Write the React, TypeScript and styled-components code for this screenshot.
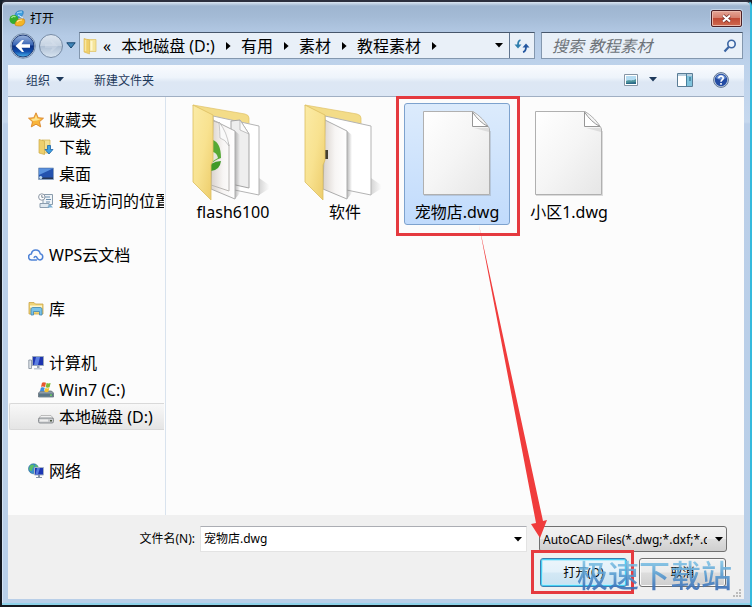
import React from 'react';
import styled, { createGlobalStyle, css } from 'styled-components';

const GlobalStyle = createGlobalStyle`
  *, *::before, *::after { box-sizing: border-box; }
  body {
    margin: 0;
    background: #14202c;
    font-family: "Noto Sans", "Noto Sans CJK SC", sans-serif;
    font-size: 12px;
    color: #000;
  }
  button, input, select { font: inherit; color: inherit; }
  button { cursor: default; }
`;

const Dialog = styled.div`
  position: relative;
  display: flex;
  flex-direction: column;
  min-height: 100vh;
  padding: 1px 6px 6px;
  border: 2px solid #14181f;
  border-top-color: #2c2f3d;
  border-right: 2px solid #35b9dc;
  border-radius: 6px 6px 0 0;
  background: linear-gradient(#dbe6f2 0, #9eb5d0 4px, #a3bad5 14px, #b5cbe6 34px, #bdd2eb 64px, #c6d8ee 120px, #bbcfe9 122px, #b9cfe8 100%);
  box-shadow: inset 0 -2px 0 #8fd3ea, inset 1px 0 0 #d5e3f3;
`;

const TitleBar = styled.header`
  display: flex;
  align-items: center;
  height: 29px;
  gap: 4px;
  padding: 2px 0 0 1px;
`;

const Title = styled.h1`
  flex: 1;
  margin: 0;
  font-size: 12px;
  line-height: 16px;
  font-weight: 400;
`;

const CloseButton = styled.button`
  display: grid;
  place-items: center;
  width: 31px;
  height: 17px;
  margin-right: 2px;
  padding: 0;
  border: 1px solid #4d2026;
  border-radius: 2px;
  background: linear-gradient(#e5a596 0, #d67f6d 45%, #c04a35 50%, #cf6a4f 100%);
  box-shadow: inset 0 0 0 1px #eab8ab, 0 0 0 1px #c3d4e6;
`;

const NavRow = styled.nav`
  display: flex;
  align-items: center;
  height: 27px;
  margin-bottom: 6px;
`;

const History = styled.div`
  display: flex;
  align-items: center;
  gap: 2px;
  width: 71px;
  padding-left: 2px;
`;

const PlainButton = styled.button`
  display: inline-flex;
  align-items: center;
  gap: 6px;
  padding: 0;
  border: 0;
  background: none;
`;

const AddressBar = styled.div`
  display: flex;
  flex: 1;
  align-items: center;
  min-width: 0;
  height: 27px;
  padding-left: 3px;
  border: 1px solid #8397ae;
  border-top-color: #46566b;
  background: #e9f0f8;
`;

const Crumbs = styled.ol`
  display: flex;
  flex: 1;
  align-items: center;
  min-width: 0;
  overflow: hidden;
  margin: 0;
  padding: 0 0 0 6px;
  gap: 10px;
  list-style: none;
`;

const Crumb = styled.li`
  display: flex;
  align-items: center;
  gap: 11px;
  white-space: nowrap;
  font-size: 16px;
  line-height: 22px;
`;

const CrumbLink = styled.a`
  color: inherit;
  text-decoration: none;
`;

const RefreshButton = styled(PlainButton)`
  justify-content: center;
  width: 25px;
  height: 25px;
  border-left: 1px solid #60758f;
`;

const AddressDrop = styled(PlainButton)`
  justify-content: center;
  width: 20px;
  height: 25px;
`;

const SearchBox = styled.form`
  display: flex;
  align-items: center;
  width: 202px;
  height: 27px;
  margin: 0 1px 0 6px;
  padding: 0 5px 0 10px;
  border: 1px solid #8397ae;
  border-top-color: #46566b;
  background: #e9f0f8;
`;

const SearchInput = styled.input`
  flex: 1;
  min-width: 0;
  padding: 0;
  border: 0;
  outline: 0;
  background: none;
  font-size: 16px;
  line-height: 24px;
  font-style: italic;
  &::placeholder { color: #6d7378; opacity: 1; }
`;

const Client = styled.div`
  display: flex;
  flex: 1;
  flex-direction: column;
  background: #fcfcfc;
`;

const Toolbar = styled.div`
  display: flex;
  align-items: center;
  height: 32px;
  padding: 0 15px 2px 18px;
  border-bottom: 1px solid #a0afc3;
  background: linear-gradient(#f9fbfe 0, #eef4fb 40%, #dde7f4 55%, #dce7f5 100%);
  color: #1e395b;
`;

const ToolGroup = styled.div<{ $gap: number }>`
  display: flex;
  align-items: center;
  gap: ${({ $gap }) => $gap}px;
`;

const ToolSpacer = styled.div`
  flex: 1;
`;

const Panes = styled.div`
  display: flex;
  flex: 1;
  min-height: 0;
`;

const Sidebar = styled.aside`
  display: flex;
  flex-direction: column;
  flex: 0 0 158px;
  min-width: 0;
  gap: 27px;
  padding: 9px 1px 30px 1px;
  border-right: 1px solid #d9e3ee;
`;

const TreeGroup = styled.ul`
  margin: 0;
  padding: 0;
  list-style: none;
`;

const TreeLink = styled.a<{ $level: number; $active?: boolean }>`
  display: flex;
  align-items: center;
  gap: 5px;
  height: 27px;
  overflow: hidden;
  border: 1px solid transparent;
  border-right: 0;
  padding-left: ${({ $level }) => ($level === 0 ? 18 : 28)}px;
  color: #000;
  text-decoration: none;
  white-space: nowrap;
  font-size: 16px;
  line-height: 24px;
  svg { flex: none; }
  ${({ $active }) =>
    $active &&
    css`
      border-color: #d9d9d9;
      border-radius: 2px 0 0 2px;
      background: linear-gradient(#f8f8f8, #e5e5e5);
    `}
`;

const FileGrid = styled.ul`
  display: flex;
  flex: 1;
  flex-wrap: wrap;
  align-content: flex-start;
  gap: 6px;
  margin: 0;
  padding: 6px 0 6px 14px;
  list-style: none;
`;

const FileItem = styled.li`
  position: relative;
`;

const FileTile = styled.button<{ $selected?: boolean }>`
  display: flex;
  flex-direction: column;
  align-items: center;
  width: 106px;
  height: 122px;
  padding: 0;
  border: 1px solid transparent;
  border-radius: 3px;
  background: none;
  font-size: 16px;
  line-height: 24px;
  white-space: nowrap;
  svg { flex: none; }
  ${({ $selected }) =>
    $selected &&
    css`
      border-color: #7da2ce;
      background: linear-gradient(#dcebfc, #c1dbfc);
    `}
`;

const Highlight = styled.span<{ $inset: string }>`
  position: absolute;
  z-index: 2;
  inset: ${({ $inset }) => $inset};
  border: 3px solid #e53a3f;
  pointer-events: none;
`;

const Footer = styled.footer`
  position: relative;
  display: grid;
  grid-template-columns: 187px minmax(0, 1fr) 188px;
  row-gap: 6px;
  padding: 11px 17px 12px 0;
  background: #f0f0f0;
`;

const FieldLabel = styled.label`
  align-self: center;
  justify-self: end;
  line-height: 18px;
`;

const ComboBox = styled.div`
  display: flex;
  align-items: center;
  height: 26px;
  margin: 0 12px 0 5px;
  padding: 0 4px 0 3px;
  border: 1px solid #e3e3e3;
  border-top-color: #abadb3;
  background: #fff;
`;

const ComboInput = styled.input`
  flex: 1;
  min-width: 0;
  padding: 0;
  border: 0;
  outline: 0;
  background: none;
  line-height: 20px;
`;

const FilterField = styled.div`
  position: relative;
  display: flex;
  svg {
    position: absolute;
    right: 4px;
    top: 11px;
    pointer-events: none;
  }
`;

const FilterSelect = styled.select`
  appearance: none;
  width: 100%;
  height: 26px;
  padding: 0 19px 0 3px;
  border: 1px solid #707070;
  border-radius: 3px;
  outline: 0;
  background: linear-gradient(#f2f2f2 0, #ebebeb 48%, #dddddd 52%, #cfcfcf 100%);
  overflow: hidden;
`;

const Actions = styled.div`
  grid-column: 3;
  display: flex;
  justify-content: space-between;
  padding: 0 1px;
`;

const ActionSlot = styled.div`
  position: relative;
`;

const ActionButton = styled.button<{ $primary?: boolean }>`
  width: 87px;
  height: 29px;
  padding: 0 0 2px;
  border: 1px solid #707070;
  border-radius: 3px;
  background: linear-gradient(#f2f2f2 0, #ebebeb 48%, #dddddd 52%, #cfcfcf 100%);
  box-shadow: inset 0 0 0 1px #fafafa;
  ${({ $primary }) =>
    $primary &&
    css`
      border-color: #3c7fb1;
      background: linear-gradient(#ecf5fa 0, #e3f1fa 48%, #d3e8f5 52%, #c8e2f1 100%);
      box-shadow: inset 0 0 0 1px #46d1f5, inset 0 0 0 2px #b9ebfa;
    `}
`;

const Watermark = styled.div`
  position: absolute;
  z-index: 3;
  right: 12px;
  bottom: 5px;
  font-family: "Noto Sans CJK SC", sans-serif;
  font-size: 31px;
  line-height: 40px;
  font-weight: 500;
  white-space: nowrap;
  color: transparent;
  background: linear-gradient(#86c8e8 15%, #5b9fd2 50%, #3b70b8 85%);
  background-clip: text;
  -webkit-background-clip: text;
  opacity: 0.9;
  pointer-events: none;
`;

const Grip = styled.svg`
  position: absolute;
  right: 2px;
  bottom: 1px;
`;

const Pointer = styled.svg`
  position: absolute;
  z-index: 2;
  left: 74px;
  top: 122px;
  pointer-events: none;
`;

const Caret = ({ color = '#000' }: { color?: string }) => (
  <svg width="8" height="5" viewBox="0 0 8 5" aria-hidden="true">
    <path d="M0 0h8L4 4.6z" fill={color} />
  </svg>
);

const CrumbArrow = () => (
  <svg width="5" height="8" viewBox="0 0 5 8" aria-hidden="true">
    <path d="M0 0l4.6 4L0 8z" fill="#000" />
  </svg>
);

const AppIcon = () => (
  <svg width="17" height="17" viewBox="0 0 17 17" aria-hidden="true">
    <path d="M6 6C6 2 9 0 14 1c1 3-1 6-5 7z" fill="#3f9fe0" stroke="#2274b8" strokeWidth=".6" />
    <path d="M8 3c2-1 4-1 5-1" stroke="#bfe4fa" fill="none" />
    <circle cx="5" cy="9.500" r="4.500" fill="#35ac2c" />
    <path d="M2.500 8c1-2 3-2 4-1" stroke="#a8e690" fill="none" strokeWidth="1.300" />
    <path d="M6 15c0-4 4-7 9-6 2 3 0 6-3 7-2 0-5 0-6-1z" fill="#f4b527" stroke="#c37b12" strokeWidth=".6" />
    <path d="M8 12c1-2 3-2 5-2" stroke="#ffe89b" fill="none" strokeWidth="1.200" />
    <path d="M9 5l5 3" stroke="#d9f0fb" strokeWidth="1" />
  </svg>
);

const CloseIcon = () => (
  <svg width="11" height="9" viewBox="0 0 11 9" aria-hidden="true">
    <path d="M2 1.500l7 6M9 1.500l-7 6" stroke="#6d2a25" strokeWidth="3.600" />
    <path d="M2 1.500l7 6M9 1.500l-7 6" stroke="#fff" strokeWidth="2.200" />
  </svg>
);

const BackIcon = () => (
  <svg width="26" height="26" viewBox="0 0 26 26" aria-hidden="true">
    <defs>
      <linearGradient id="back" x1="0" y1="0" x2="0" y2="1">
        <stop offset="0" stopColor="#9db6de" />
        <stop offset=".45" stopColor="#3764b4" />
        <stop offset=".5" stopColor="#0b2f84" />
        <stop offset=".75" stopColor="#124fae" />
        <stop offset="1" stopColor="#4cb8ee" />
      </linearGradient>
    </defs>
    <circle cx="13" cy="13" r="12.300" fill="#d9e5f2" stroke="#7189a8" />
    <circle cx="13" cy="13" r="11" fill="url(#back)" stroke="#203d78" />
    <path d="M5.500 13l6.500-6h2l-2.500 4.200H20v3.600h-8.500L14 19h-2z" fill="#fff" />
  </svg>
);

const ForwardIcon = () => (
  <svg width="26" height="26" viewBox="0 0 26 26" aria-hidden="true">
    <defs>
      <linearGradient id="fwd" x1="0" y1="0" x2="0" y2="1">
        <stop offset="0" stopColor="#dfe7f1" />
        <stop offset=".48" stopColor="#c6d3e2" />
        <stop offset=".52" stopColor="#b0c1d5" />
        <stop offset="1" stopColor="#d9e5f1" />
      </linearGradient>
    </defs>
    <circle cx="13" cy="13" r="11.500" fill="url(#fwd)" stroke="#768ba5" />
    <path d="M20 13l-6-5.500h-2l2.500 3.700H7v3.600h7.500L12 18.500h2z" fill="#dce6f0" opacity=".35" />
  </svg>
);

const HistoryCaret = () => (
  <svg width="10" height="7" viewBox="0 0 10 7" aria-hidden="true">
    <path d="M.8.800h8.400L5 6z" fill="#3f85b8" stroke="#17466f" />
  </svg>
);

const SmallFolder = () => (
  <svg width="14" height="18" viewBox="0 0 14 18" aria-hidden="true">
    <path d="M4 2.500h9v12H4z" fill="#f6e59b" stroke="#dec062" strokeWidth=".7" />
    <path d="M1 1.500l5.500 1.500v14L1 15z" fill="#efcf6a" stroke="#d8b452" strokeWidth=".6" />
    <path d="M8.500 4v9.500" stroke="#fff7cf" strokeWidth="2" />
    <path d="M2.500 3v11" stroke="#f8e6a2" strokeWidth="1.500" />
  </svg>
);

const RefreshIcon = () => (
  <svg width="16" height="14" viewBox="0 0 16 14" aria-hidden="true">
    <path d="M6.500 1C4.500 1.500 4 3 4 6" stroke="#2f7fae" strokeWidth="1.800" fill="none" />
    <path d="M.5 5.500h7L4 9.500z" fill="#2f7fae" />
    <path d="M9 13c2.300-.5 3-2 3-5" stroke="#2457a0" strokeWidth="1.800" fill="none" />
    <path d="M8.500 8.500h7L12 4.500z" fill="#2457a0" />
  </svg>
);

const SearchIcon = () => (
  <svg width="14" height="14" viewBox="0 0 14 14" aria-hidden="true">
    <circle cx="8.500" cy="5" r="3.700" fill="#eef5fd" stroke="#3a64a2" strokeWidth="1.600" />
    <path d="M5.700 8L1.500 12.500" stroke="#3a64a2" strokeWidth="2.200" />
  </svg>
);

const ViewIcon = () => (
  <svg width="14" height="12" viewBox="0 0 14 12" aria-hidden="true">
    <path d="M.5.500h13v11H.5z" fill="#fff" stroke="#8695a5" />
    <path d="M2 2h10v8H2z" fill="#b5dcf2" />
    <path d="M2 7c3-2 5 1 10-2v5H2z" fill="#4f939b" />
    <path d="M2 9l10-1v2H2z" fill="#2b6a88" />
  </svg>
);

const PaneIcon = () => (
  <svg width="16" height="14" viewBox="0 0 16 14" aria-hidden="true">
    <path d="M.5.500h15v13H.5z" fill="#fff" stroke="#5a7d96" />
    <path d="M1 1h14v2H1z" fill="#b8cfdf" />
    <path d="M10 3h5v10h-5z" fill="#80c3dc" />
    <path d="M9.500 1v12" stroke="#47809d" />
    <path d="M12 5h2M12 7h2" stroke="#235d7d" />
  </svg>
);

const HelpIcon = () => (
  <svg width="16" height="16" viewBox="0 0 16 16" aria-hidden="true">
    <circle cx="8" cy="8" r="7.400" fill="#c5d2e3" stroke="#5f7492" />
    <circle cx="8" cy="8" r="6.200" fill="#234ba3" />
    <path d="M3 6a5.500 5.500 0 0 1 10 0c-3 2-7 2-10 0z" fill="#6b91d3" />
    <path d="M5.800 6.300c0-3 4.600-2.800 4.400 0C10.100 8 8 8 8 9.800M8 11v1.700" stroke="#fff" strokeWidth="1.600" fill="none" />
  </svg>
);

const StarIcon = () => (
  <svg width="16" height="16" viewBox="0 0 16 16" aria-hidden="true">
    <path d="M8 .8l2.200 4.900 5.300.5-4 3.500 1.200 5.200L8 12.200l-4.700 2.700 1.200-5.200-4-3.500 5.300-.5z" fill="#f9b53a" stroke="#d9862a" strokeWidth=".9" strokeLinejoin="round" />
    <path d="M8 3l1.300 3.600L13 7l-4 1.500L5 9l-2-2 3.700-.4z" fill="#fde491" />
  </svg>
);

const DownloadIcon = () => (
  <svg width="16" height="16" viewBox="0 0 16 16" aria-hidden="true">
    <path d="M4 1h8v13H4z" fill="#f3df92" stroke="#cfb04f" strokeWidth=".7" />
    <path d="M1 .5l5.500 1.500v13.500L1 14z" fill="#eecf6c" stroke="#ccaa48" strokeWidth=".7" />
    <path d="M9.500 6.500h3v4H15L11 15l-4-4.500h2.500z" fill="#3e9fe2" stroke="#1c63a8" strokeWidth=".8" />
  </svg>
);

const DesktopIcon = () => (
  <svg width="16" height="16" viewBox="0 0 16 16" aria-hidden="true">
    <path d="M.5 2h15v11.500H.5z" fill="#2452ae" stroke="#8ca1ba" strokeWidth=".8" />
    <path d="M1 2.500h14L1 9z" fill="#5991de" />
    <path d="M1 11.500h14V13H1z" fill="#263756" />
    <circle cx="2.700" cy="11.500" r="1.600" fill="#bcd9ef" />
  </svg>
);

const RecentIcon = () => (
  <svg width="16" height="16" viewBox="0 0 16 16" aria-hidden="true">
    <path d="M5 1.500h9.500v10H5z" fill="#eff4f8" stroke="#8a9cac" />
    <path d="M7 4h5M8 6.500h5M8 9h4" stroke="#6d8fae" />
    <path d="M2 10.500h9v4H2z" fill="#dfe8ef" stroke="#8b9daf" />
    <path d="M12 11l3 3.500H9z" fill="#7fb0d2" />
    <circle cx="3.800" cy="4" r="3.200" fill="#fff" stroke="#8d98a5" />
    <path d="M3.800 2v2.300h1.700" stroke="#586a7c" fill="none" strokeWidth=".8" />
  </svg>
);

const CloudIcon = () => (
  <svg width="16" height="16" viewBox="0 0 16 16" fill="none" stroke="#4e82d6" strokeWidth="1.500" strokeLinecap="round" strokeLinejoin="round" aria-hidden="true">
    <path d="M8.500 13H3.800A3 3 0 0 1 3.400 7C3.700 4.500 5.500 3 7.800 3c2.300 0 4 1.400 4.400 3.700A3.200 3.200 0 0 1 12 13c-2 0-2.500-1.300-3.300-2.800-.6-1.100-2.200-1-2.500.2" />
  </svg>
);

const LibraryIcon = () => (
  <svg width="16" height="16" viewBox="0 0 16 16" aria-hidden="true">
    <path d="M1 3V1.500h5L7.500 3H15v10H1z" fill="#efd376" stroke="#caa547" strokeWidth=".8" />
    <path d="M2 4.500h12v2H2z" fill="#fff6cd" />
    <path d="M3 14V8.500C3 7 4 6.500 5 6.500h7c1 0 2 .5 2 2V14h-2.500v-3.500h-6V14z" fill="#79c2e8" stroke="#3d87b5" strokeWidth=".8" />
  </svg>
);

const ComputerIcon = () => (
  <svg width="16" height="16" viewBox="0 0 16 16" aria-hidden="true">
    <path d="M.8 5h2.700v8.500H.8z" fill="#dfe4ea" stroke="#7f8b99" strokeWidth=".8" />
    <path d="M4.500 1.500h11v9h-11z" fill="#1d34b0" stroke="#9aa8ba" />
    <path d="M8 2h4l-2 8H6z" fill="#5d80e2" />
    <path d="M9 11h2.500v2H9z" fill="#98a5b5" />
    <path d="M6 13h8v1.500H6z" fill="#c2cad4" />
  </svg>
);

const WinDriveIcon = () => (
  <svg width="16" height="16" viewBox="0 0 16 16" aria-hidden="true">
    <path d="M2.500 9h11l2 2v4H.5v-4z" fill="#8e9ba7" stroke="#54616d" strokeWidth=".7" />
    <path d="M1 11.500h14v3H1z" fill="#5b7686" />
    <path d="M12 12.500h2v1.200h-2z" fill="#6fe05d" />
    <path d="M4 .8c1.700-1 2.700-.6 4 0L7 4.900c-1.200-.6-2.500-.7-4 0z" fill="#e8562c" />
    <path d="M8.600 1.100c1.300.6 2.400.6 4 0l-1 4.100c-1.400.7-2.700.6-4 0z" fill="#7fb936" />
    <path d="M2.900 5.700c1.300-.7 2.600-.6 3.900 0l-1 3.800c-1.300-.6-2.500-.6-3.900 0z" fill="#3f8ddd" />
    <path d="M7.400 6c1.300.6 2.500.6 3.900 0l-1 3.800c-1.300.7-2.600.6-3.900 0z" fill="#f6c22f" />
  </svg>
);

const DriveIcon = () => (
  <svg width="16" height="16" viewBox="0 0 16 16" aria-hidden="true">
    <path d="M3 6.500h10l2.500 3H.5z" fill="#f1f1f1" stroke="#a5a5a5" strokeWidth=".7" />
    <rect x=".5" y="9" width="15" height="5" rx="1.500" fill="#c9cbcd" stroke="#777b80" strokeWidth=".8" />
    <path d="M2 10.500h8v2H2z" fill="#eee" />
    <path d="M12 11h2v1.500h-2z" fill="#4d5a45" />
  </svg>
);

const NetworkIcon = () => (
  <svg width="16" height="16" viewBox="0 0 16 16" aria-hidden="true">
    <circle cx="5.500" cy="5.800" r="5" fill="#3b91c9" stroke="#2a688f" strokeWidth=".6" />
    <path d="M2 3c2-2 4-1 4 0S4 5 4 7 2 8 1 6zM7 1.500c2 .5 3 2 3 3L7.500 4z" fill="#5bbf64" />
    <path d="M6.500 4.500h9v7.500h-9z" fill="#1c36b4" stroke="#a6b2c4" />
    <path d="M9 5h3l-2 6.500H7.500z" fill="#577bdc" />
    <path d="M10 12h2v2h-2zM8 14h6v1H8z" fill="#8593a5" />
  </svg>
);

const FolderIcon = ({ id, variant }: { id: string; variant: 'pages' | 'plain' }) => (
  <svg width="96" height="96" viewBox="0 0 96 96" aria-hidden="true">
    <defs>
      <linearGradient id={`${id}-front`} x1="0" y1="0" x2="1" y2="1">
        <stop offset="0" stopColor="#fbeba6" />
        <stop offset=".5" stopColor="#f8e290" />
        <stop offset="1" stopColor="#eccb68" />
      </linearGradient>
      <linearGradient id={`${id}-page`} x1="0" y1="0" x2="1" y2="0">
        <stop offset="0" stopColor="#d9d2cc" />
        <stop offset=".5" stopColor="#f7f5f4" />
        <stop offset="1" stopColor="#fff" />
      </linearGradient>
      <linearGradient id={`${id}-shade`} x1="0" y1="0" x2="1" y2="0">
        <stop offset="0" stopColor="#888" stopOpacity=".6" />
        <stop offset="1" stopColor="#888" stopOpacity="0" />
      </linearGradient>
      <linearGradient id={`${id}-floor`} x1="0" y1="0" x2="1" y2="0">
        <stop offset="0" stopColor="#999" stopOpacity=".4" />
        <stop offset=".8" stopColor="#999" stopOpacity="0" />
      </linearGradient>
    </defs>
    <path d="M74 91l13-8-13-9z" fill={`url(#${id}-floor)`} />
    <path d="M8 1l52 9q4 1 4 4v40L28 70z" fill="#f3dc88" stroke="#dfc269" strokeWidth=".7" />
    <path d="M28 12l46 10v69L30 82z" fill="#fff" stroke="#b4b4b4" />
    {variant === 'pages' && (
      <>
        <path d="M46 17l9-1 9 14v54l-18-4z" fill="#eee" stroke="#a5a5a5" />
        <path d="M55 16v10l9 4z" fill="#fafafa" stroke="#aaa" strokeWidth=".7" />
      </>
    )}
    <path d="M50 27l5 4v58l-5 6z" fill={`url(#${id}-shade)`} />
    <path d="M28 16l22 11v68L26 85z" fill={`url(#${id}-page)`} stroke="#adadad" />
    {variant === 'pages' ? (
      <>
        <path d="M28 17l7 2 9 22v46l-18-6" fill="none" stroke="#b9b6b3" />
        <path d="M34 18q1 11 1 16 5 1 9 8-2-14-10-24z" fill="#fafafa" stroke="#aaa" strokeWidth=".6" />
        <path d="M28 36q8 3 8 18-4 1-8 4z" fill="#55a935" />
        <path d="M26 60q5-3 10-3-1 9-10 10z" fill="#3f9a28" />
        <path d="M28 48q4 1 5 6l-5 3z" fill="#e4e6dd" />
      </>
    ) : (
      <path d="M28 46h3v9h-3z" fill="#443f31" />
    )}
    <path d="M8 1l20 10v45l-2 5v35L8 78z" fill={`url(#${id}-front)`} stroke="#dcbe60" strokeWidth=".8" />
  </svg>
);

const DocumentIcon = ({ id }: { id: string }) => (
  <svg width="96" height="96" viewBox="0 0 96 96" aria-hidden="true">
    <defs>
      <linearGradient id={id} x1="0" y1="0" x2="1" y2="1">
        <stop offset="0" stopColor="#fff" />
        <stop offset=".5" stopColor="#f5f5f5" />
        <stop offset="1" stopColor="#e6e6e6" />
      </linearGradient>
    </defs>
    <path d="M15 91h66V27" fill="none" stroke="#777" opacity=".25" strokeWidth="2" />
    <path d="M14.500 7.500H64q10 6 16.500 17v66h-66z" fill={`url(#${id})`} stroke="#b0b0b0" />
    <path d="M63.500 8v14.500H79Q70 18 63.500 8z" fill="#fff" stroke="#969696" strokeLinejoin="round" />
    <path d="M65 24h15v4z" fill="#aaa" opacity=".3" />
  </svg>
);

type TreeNode = { label: string; icon: React.ReactNode; level: number; active?: boolean };

const tree: TreeNode[][] = [
  [
    { label: '收藏夹', icon: <StarIcon />, level: 0 },
    { label: '下载', icon: <DownloadIcon />, level: 1 },
    { label: '桌面', icon: <DesktopIcon />, level: 1 },
    { label: '最近访问的位置', icon: <RecentIcon />, level: 1 },
  ],
  [{ label: 'WPS云文档', icon: <CloudIcon />, level: 0 }],
  [{ label: '库', icon: <LibraryIcon />, level: 0 }],
  [
    { label: '计算机', icon: <ComputerIcon />, level: 0 },
    { label: 'Win7 (C:)', icon: <WinDriveIcon />, level: 1 },
    { label: '本地磁盘 (D:)', icon: <DriveIcon />, level: 1, active: true },
  ],
  [{ label: '网络', icon: <NetworkIcon />, level: 0 }],
];

const files = [
  { name: 'flash6100', icon: <FolderIcon id="flash" variant="pages" /> },
  { name: '软件', icon: <FolderIcon id="soft" variant="plain" /> },
  { name: '宠物店.dwg', icon: <DocumentIcon id="petshop" />, selected: true },
  { name: '小区1.dwg', icon: <DocumentIcon id="estate" /> },
];

const crumbs = ['本地磁盘 (D:)', '有用', '素材', '教程素材'];

export default function App() {
  return (
    <>
      <GlobalStyle />
      <Dialog role="dialog" aria-labelledby="dialog-title">
        <TitleBar>
          <AppIcon />
          <Title id="dialog-title">打开</Title>
          <CloseButton type="button" aria-label="关闭"><CloseIcon /></CloseButton>
        </TitleBar>

        <NavRow aria-label="地址">
          <History>
            <PlainButton type="button" aria-label="后退"><BackIcon /></PlainButton>
            <PlainButton type="button" aria-label="前进"><ForwardIcon /></PlainButton>
            <PlainButton type="button" aria-label="历史"><HistoryCaret /></PlainButton>
          </History>
          <AddressBar>
            <SmallFolder />
            <Crumbs>
              <Crumb>«</Crumb>
              {crumbs.map((crumb) => (
                <Crumb key={crumb}>
                  <CrumbLink href="#">{crumb}</CrumbLink>
                  <CrumbArrow />
                </Crumb>
              ))}
            </Crumbs>
            <AddressDrop type="button" aria-label="以前的位置"><Caret /></AddressDrop>
            <RefreshButton type="button" aria-label="刷新"><RefreshIcon /></RefreshButton>
          </AddressBar>
          <SearchBox role="search">
            <SearchInput type="text" aria-label="搜索 教程素材" placeholder="搜索 教程素材" />
            <PlainButton type="button" aria-label="搜索"><SearchIcon /></PlainButton>
          </SearchBox>
        </NavRow>

        <Client>
          <Toolbar>
            <ToolGroup $gap={30}>
              <PlainButton type="button">组织 <Caret color="#1e395b" /></PlainButton>
              <PlainButton type="button">新建文件夹</PlainButton>
            </ToolGroup>
            <ToolSpacer />
            <ToolGroup $gap={20}>
              <ToolGroup $gap={11}>
                <PlainButton type="button" aria-label="更改视图"><ViewIcon /></PlainButton>
                <PlainButton type="button" aria-label="更多选项"><Caret color="#1e395b" /></PlainButton>
              </ToolGroup>
              <PlainButton type="button" aria-label="预览窗格"><PaneIcon /></PlainButton>
              <PlainButton type="button" aria-label="帮助"><HelpIcon /></PlainButton>
            </ToolGroup>
          </Toolbar>

          <Panes>
            <Sidebar>
              {tree.map((group) => (
                <TreeGroup key={group[0].label}>
                  {group.map((node) => (
                    <li key={node.label}>
                      <TreeLink href="#" $level={node.level} $active={node.active}>
                        {node.icon}
                        {node.label}
                      </TreeLink>
                    </li>
                  ))}
                </TreeGroup>
              ))}
            </Sidebar>
            <FileGrid>
              {files.map((file) => (
                <FileItem key={file.name}>
                  <FileTile type="button" $selected={file.selected}>
                    {file.icon}
                    {file.name}
                  </FileTile>
                  {file.selected && (
                    <>
                      <Highlight $inset="-7px -10px -11px -8px" />
                      <Pointer width="72" height="314" viewBox="0 0 72 314" aria-hidden="true">
                        <path d="M1 0L65 296l4-1-7 18-9-14 5-1z" fill="#f03c3c" />
                      </Pointer>
                    </>
                  )}
                </FileItem>
              ))}
            </FileGrid>
          </Panes>

          <Footer>
            <FieldLabel htmlFor="file-name">文件名(N):</FieldLabel>
            <ComboBox>
              <ComboInput id="file-name" type="text" defaultValue="宠物店.dwg" />
              <PlainButton type="button" aria-label="文件名列表"><Caret /></PlainButton>
            </ComboBox>
            <FilterField>
              <FilterSelect aria-label="文件类型">
                <option>AutoCAD Files(*.dwg;*.dxf;*.dwt)</option>
              </FilterSelect>
              <Caret />
            </FilterField>
            <Actions>
              <ActionSlot>
                <ActionButton type="button" $primary>打开(O)</ActionButton>
                <Highlight $inset="-8px -7px -7px -9px" />
              </ActionSlot>
              <ActionSlot>
                <ActionButton type="button">取消</ActionButton>
              </ActionSlot>
            </Actions>
            <Watermark>极速下载站</Watermark>
            <Grip width="10" height="10" viewBox="0 0 10 10" aria-hidden="true">
              <path d="M7 1h2v2H7zM4 4h2v2H4zM7 4h2v2H7zM1 7h2v2H1zM4 7h2v2H4zM7 7h2v2H7z" fill="#bcbcbc" />
            </Grip>
          </Footer>
        </Client>
      </Dialog>
    </>
  );
}
